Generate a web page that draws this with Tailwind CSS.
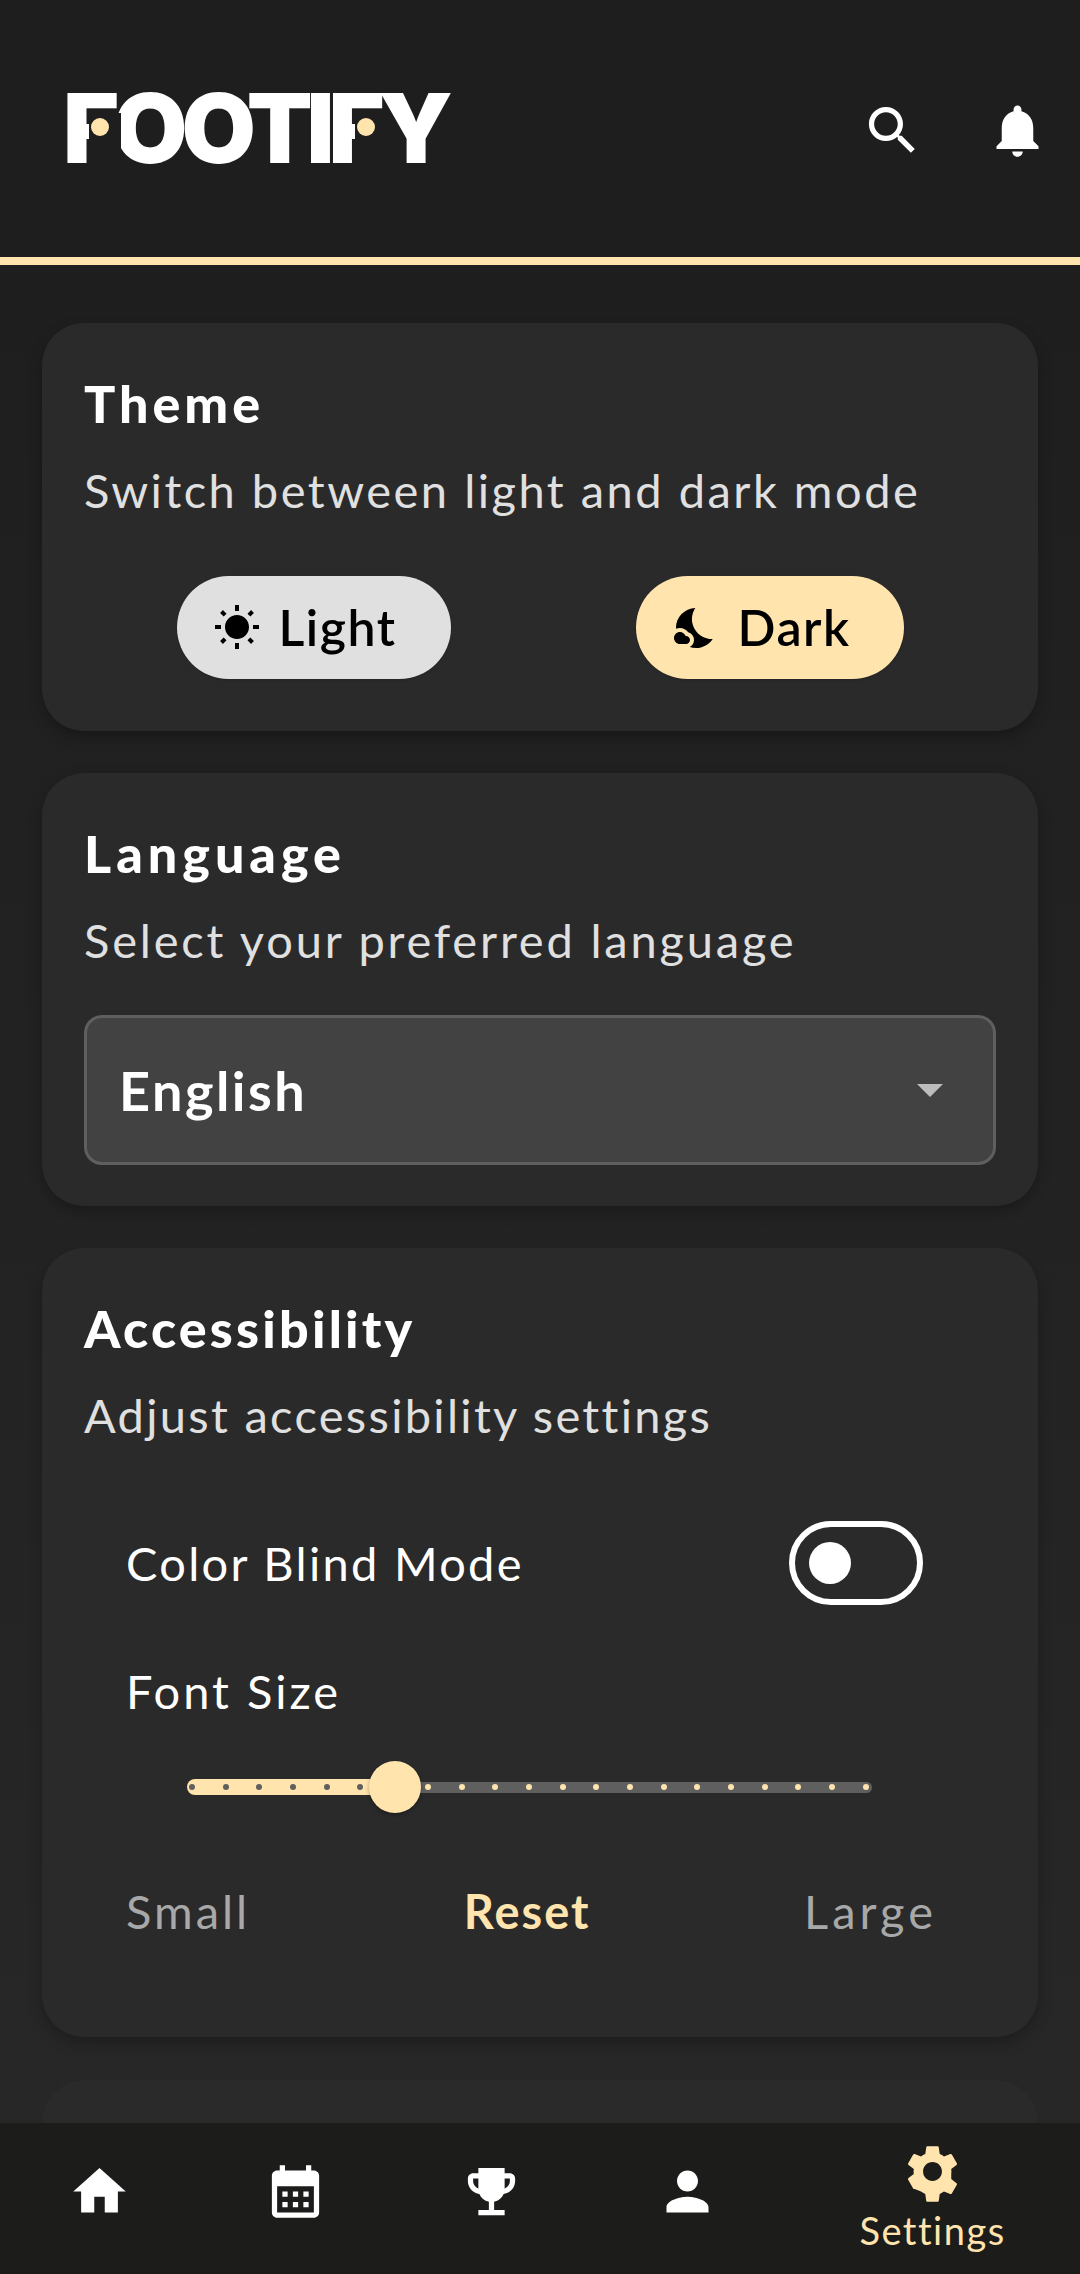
<!DOCTYPE html>
<html lang="en">
  <head>
    <meta charset="UTF-8" />
    <meta name="viewport" content="width=device-width, initial-scale=1.0" />
    <title>Settings - Footify</title>
    <script src="https://cdn.jsdelivr.net/npm/@tailwindcss/browser@4"></script>
  </head>
  <body class="bg-[#1e1e1e] [font-family:Lato,sans-serif]">
    <div class="h-[2274px] flex flex-col overflow-hidden">
      <!-- Header -->
      <header class="h-[265px] shrink-0 border-b-8 border-[#ffe4ad] bg-[#1e1e1e] flex items-center justify-between pl-[63px] pr-[31px]">
        <div class="flex text-white text-[96px] leading-[96px] font-black tracking-[-6px] -mt-[2px] [font-family:Inter,sans-serif]">
          <span class="relative">F<span class="absolute left-[26px] top-[33px] w-[32px] h-[50px] bg-[#1e1e1e]"></span><span class="absolute left-[28px] top-[38px] w-[18px] h-[18px] rounded-full bg-[#ffe4ad]"></span></span>
          <span>OOTI</span>
          <span class="relative">F<span class="absolute left-[26px] top-[33px] w-[32px] h-[50px] bg-[#1e1e1e]"></span><span class="absolute left-[28px] top-[38px] w-[18px] h-[18px] rounded-full bg-[#ffe4ad]"></span></span>
          <span>Y</span>
        </div>
        <div class="flex items-center gap-[62px] mt-[4px]">
          <svg viewBox="0 0 24 24" class="w-[63px] h-[63px] fill-white"><path d="M15.5 14h-.79l-.28-.27C15.41 12.59 16 11.11 16 9.5 16 5.91 13.09 3 9.5 3S3 5.91 3 9.5 5.91 16 9.5 16c1.61 0 3.09-.59 4.23-1.57l.27.28v.79l5 4.99L20.49 19l-4.99-5zm-6 0C7.01 14 5 11.99 5 9.5S7.01 5 9.5 5 14 7.01 14 9.5 11.99 14 9.5 14z"/></svg>
          <svg viewBox="0 0 24 24" class="w-[63px] h-[63px] fill-white"><path d="M12 22c1.1 0 2-.9 2-2h-4c0 1.1.89 2 2 2zm6-6v-5c0-3.07-1.64-5.64-4.5-6.32V4c0-.83-.67-1.5-1.5-1.5s-1.5.67-1.5 1.5v.68C7.63 5.36 6 7.92 6 11v5l-2 2v1h16v-1l-2-2z"/></svg>
        </div>
      </header>

      <!-- Settings cards -->
      <main class="flex-1 overflow-hidden px-[42px] pt-[58px] flex flex-col gap-[42px] bg-linear-to-b from-[#1e1e1e] to-[#272727]">
        <section class="shrink-0 rounded-[42px] bg-[#2a2a2a] shadow-[0_6px_14px_rgba(0,0,0,0.25)] px-[42px] pt-[50px] pb-[52px]">
          <h2 class="text-white text-[52px] leading-[60px] font-black tracking-[4px]">Theme</h2>
          <p class="mt-[27px] text-[#e0e0e0] text-[47px] leading-[60px] tracking-[2.5px]">Switch between light and dark mode</p>
          <div class="mt-[56px] flex justify-around">
            <button class="w-[274px] h-[103px] rounded-full bg-[#e0e0e0] flex items-center pl-[36px] gap-[18px] text-black text-[50px] font-semibold tracking-[1.5px] shadow-sm">
              <svg viewBox="0 0 24 24" class="w-[48px] h-[48px] fill-black"><path d="M6.76 4.84l-1.8-1.79-1.41 1.41 1.79 1.79 1.42-1.41zM4 10.5H1v2h3v-2zm9-9.95h-2V3.5h2V.55zm7.45 3.91l-1.41-1.41-1.79 1.79 1.41 1.41 1.79-1.79zm-3.21 13.7l1.79 1.8 1.41-1.41-1.8-1.79-1.4 1.4zM20 10.5v2h3v-2h-3zm-8-5c-3.31 0-6 2.69-6 6s2.69 6 6 6 6-2.69 6-6-2.69-6-6-6zm-1 16.95h2V19.5h-2v2.95zm-7.45-3.91l1.41 1.41 1.79-1.8-1.41-1.41-1.79 1.8z"/></svg>
              Light
            </button>
            <button class="w-[268px] h-[103px] rounded-full bg-[#ffe4ad] flex items-center pl-[36px] gap-[18px] text-black text-[50px] font-semibold tracking-[1.5px] shadow-sm">
              <svg viewBox="0 0 24 24" class="w-[48px] h-[48px] fill-black"><path d="M11.1 12.08c-2.33-4.51-.5-8.48.53-10.07C6.27 2.2 1.98 6.59 1.98 12c0 .14.02.28.02.42.62-.27 1.29-.42 2-.42 1.66 0 3.18.83 4.1 2.15 1.67.48 2.9 2.03 2.9 3.85 0 1.52-.87 2.83-2.12 3.51.98.32 2.03.5 3.11.5 3.5 0 6.58-1.8 8.37-4.52-2.36.23-6.98-.97-9.26-5.41z"/><path d="M7 16h-.18C6.4 14.84 5.3 14 4 14c-1.66 0-3 1.34-3 3s1.34 3 3 3h3c1.1 0 2-.9 2-2s-.9-2-2-2z"/></svg>
              Dark
            </button>
          </div>
        </section>

        <section class="shrink-0 rounded-[42px] bg-[#2a2a2a] shadow-[0_6px_14px_rgba(0,0,0,0.25)] px-[42px] pt-[50px] pb-[41px]">
          <h2 class="text-white text-[52px] leading-[60px] font-black tracking-[5px]">Language</h2>
          <p class="mt-[27px] text-[#e0e0e0] text-[47px] leading-[60px] tracking-[2.8px]">Select your preferred language</p>
          <div class="mt-[45px] h-[150px] rounded-[18px] border-[3px] border-[#5f5f5f] bg-[#424242] flex items-center justify-between pl-[32px] pr-[50px]">
            <span class="text-white text-[54px] font-bold tracking-[2.5px]">English</span>
            <span class="w-0 h-0 border-x-[13px] border-x-transparent border-t-[13px] border-t-[#bdbdbd]"></span>
          </div>
        </section>

        <section class="shrink-0 rounded-[42px] bg-[#2a2a2a] shadow-[0_6px_14px_rgba(0,0,0,0.25)] pt-[50px] pb-[96px]">
          <div class="px-[42px]">
            <h2 class="text-white text-[52px] leading-[60px] font-black tracking-[3.2px]">Accessibility</h2>
            <p class="mt-[27px] text-[#e0e0e0] text-[47px] leading-[60px] tracking-[2.3px]">Adjust accessibility settings</p>
          </div>
          <div class="mt-[76px] pl-[84px] pr-[115px] flex items-center justify-between">
            <span class="text-white text-[47px] leading-[60px] tracking-[2.3px]">Color Blind Mode</span>
            <div class="w-[134px] h-[84px] rounded-full border-[6px] border-white flex items-center pl-[14px]">
              <span class="w-[42px] h-[42px] rounded-full bg-white"></span>
            </div>
          </div>
          <p class="mt-[56px] pl-[84px] text-white text-[47px] leading-[60px] tracking-[3px]">Font Size</p>

          <!-- Slider -->
          <div class="relative mt-[40px] ml-[145px] w-[685px] h-[52px] flex items-center">
            <div class="w-[208px] h-[16px] rounded-l-full bg-[#ffe4ad]"></div>
            <div class="flex-1 h-[11px] rounded-r-full bg-[#5f5f5f]"></div>
            <div class="absolute left-[2px] right-[3px] top-[23px] flex justify-between">
              <i class="w-[6px] h-[6px] rounded-full bg-[#5f5f5f]"></i><i class="w-[6px] h-[6px] rounded-full bg-[#5f5f5f]"></i><i class="w-[6px] h-[6px] rounded-full bg-[#5f5f5f]"></i><i class="w-[6px] h-[6px] rounded-full bg-[#5f5f5f]"></i><i class="w-[6px] h-[6px] rounded-full bg-[#5f5f5f]"></i><i class="w-[6px] h-[6px] rounded-full bg-[#5f5f5f]"></i><i class="w-[6px] h-[6px] rounded-full bg-[#ffe4ad]"></i>
              <i class="w-[6px] h-[6px] rounded-full bg-[#ffe4ad]"></i><i class="w-[6px] h-[6px] rounded-full bg-[#ffe4ad]"></i><i class="w-[6px] h-[6px] rounded-full bg-[#ffe4ad]"></i><i class="w-[6px] h-[6px] rounded-full bg-[#ffe4ad]"></i><i class="w-[6px] h-[6px] rounded-full bg-[#ffe4ad]"></i><i class="w-[6px] h-[6px] rounded-full bg-[#ffe4ad]"></i><i class="w-[6px] h-[6px] rounded-full bg-[#ffe4ad]"></i>
              <i class="w-[6px] h-[6px] rounded-full bg-[#ffe4ad]"></i><i class="w-[6px] h-[6px] rounded-full bg-[#ffe4ad]"></i><i class="w-[6px] h-[6px] rounded-full bg-[#ffe4ad]"></i><i class="w-[6px] h-[6px] rounded-full bg-[#ffe4ad]"></i><i class="w-[6px] h-[6px] rounded-full bg-[#ffe4ad]"></i><i class="w-[6px] h-[6px] rounded-full bg-[#ffe4ad]"></i><i class="w-[6px] h-[6px] rounded-full bg-[#ffe4ad]"></i>
            </div>
            <div class="absolute left-[182px] top-0 w-[52px] h-[52px] rounded-full bg-[#ffe4ad] shadow-[0_2px_4px_rgba(0,0,0,0.3)]"></div>
          </div>

          <div class="mt-[68px] pl-[84px] pr-[101px] flex justify-between text-[47px] leading-[60px] tracking-[3px]">
            <span class="text-[#a8a8a8]">Small</span>
            <span class="text-[#ffe4ad] font-bold tracking-[2px]">Reset</span>
            <span class="text-[#a8a8a8] tracking-[4px]">Large</span>
          </div>
        </section>

        <section class="mt-[1px] h-[100px] shrink-0 rounded-t-[42px] bg-[#2a2a2a]"></section>
      </main>

      <!-- Bottom nav -->
      <nav class="relative h-[151px] shrink-0 bg-[#1c1c1b] flex pl-[1px]">
        <a class="w-[196px] pt-[37px] flex justify-center">
          <svg viewBox="0 0 24 24" class="w-[63px] h-[63px] fill-white"><path d="M10 20v-6h4v6h5v-8h3L12 3 2 12h3v8z"/></svg>
        </a>
        <a class="w-[196px] pt-[37px] flex justify-center">
          <svg viewBox="0 0 24 24" class="w-[63px] h-[63px] fill-white"><path d="M19 4h-1V2h-2v2H8V2H6v2H5c-1.1 0-2 .9-2 2v14c0 1.1.9 2 2 2h14c1.1 0 2-.9 2-2V6c0-1.1-.9-2-2-2zm0 16H5V10h14v10zM9 14H7v-2h2v2zm4 0h-2v-2h2v2zm4 0h-2v-2h2v2zm-8 4H7v-2h2v2zm4 0h-2v-2h2v2zm4 0h-2v-2h2v2z"/></svg>
        </a>
        <a class="w-[196px] pt-[37px] flex justify-center">
          <svg viewBox="0 0 24 24" class="w-[63px] h-[63px] fill-white"><path d="M19 5h-2V3H7v2H5c-1.1 0-2 .9-2 2v1c0 2.55 1.92 4.63 4.39 4.94.63 1.5 1.98 2.63 3.61 2.96V19H7v2h10v-2h-4v-3.1c1.63-.33 2.98-1.46 3.61-2.96C19.08 12.63 21 10.55 21 8V7c0-1.1-.9-2-2-2zM5 8V7h2v3.82C5.84 10.4 5 9.3 5 8zm14 0c0 1.3-.84 2.4-2 2.82V7h2v1z"/></svg>
        </a>
        <a class="w-[196px] pt-[37px] flex justify-center">
          <svg viewBox="0 0 24 24" class="w-[63px] h-[63px] fill-white"><path d="M12 12c2.21 0 4-1.79 4-4s-1.79-4-4-4-4 1.79-4 4 1.79 4 4 4zm0 2c-2.67 0-8 1.34-8 4v2h16v-2c0-2.66-5.33-4-8-4z"/></svg>
        </a>
        <a class="flex-1 pt-[17px] flex flex-col items-center text-[#ffe4ad]">
          <svg viewBox="0 0 24 24" class="w-[63px] h-[63px] fill-[#ffe4ad]"><path d="M19.14 12.94c.04-.3.06-.61.06-.94 0-.32-.02-.64-.07-.94l2.03-1.58c.18-.14.23-.41.12-.61l-1.92-3.32c-.12-.22-.37-.29-.59-.22l-2.39.96c-.5-.38-1.03-.7-1.62-.94l-.36-2.54c-.04-.24-.24-.41-.48-.41h-3.84c-.24 0-.43.17-.47.41l-.36 2.54c-.59.24-1.13.57-1.62.94l-2.39-.96c-.22-.08-.47 0-.59.22L2.74 8.87c-.12.21-.08.47.12.61l2.03 1.58c-.05.3-.09.63-.09.94s.02.64.07.94l-2.03 1.58c-.18.14-.23.41-.12.61l1.92 3.32c.12.22.37.29.59.22l2.39.96c.5.38 1.03.7 1.62.94l.36 2.54c.05.24.24.41.48.41h3.84c.24 0 .44-.17.47-.41l.36-2.54c.59-.24 1.13-.56 1.62-.94l2.39.96c.22.08.47 0 .59-.22l1.92-3.32c.12-.22.07-.47-.12-.61l-2.01-1.58zM12 15.6c-1.98 0-3.6-1.62-3.6-3.6s1.62-3.6 3.6-3.6 3.6 1.62 3.6 3.6-1.62 3.6-3.6 3.6z"/></svg>
          <span class="mt-[3px] text-[38px] leading-[48px] tracking-[1.5px]">Settings</span>
        </a>
      </nav>
    </div>
  </body>
</html>
